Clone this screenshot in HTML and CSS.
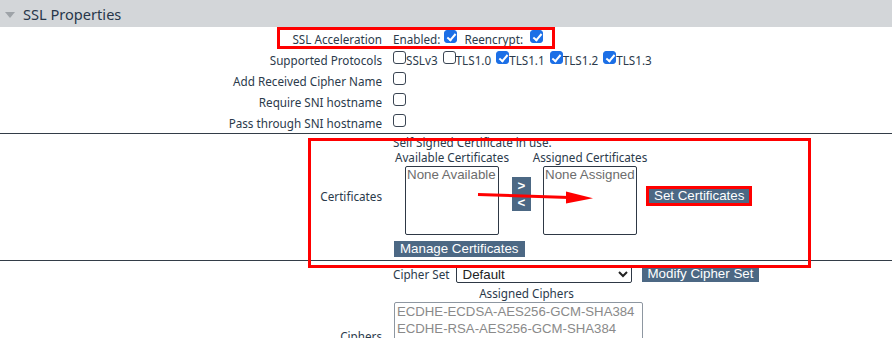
FILE: index.html
```html
<!DOCTYPE html>
<html>
<head>
<meta charset="utf-8">
<link rel="stylesheet" href="styles.css">
</head>
<body>
<div class="page">
  <div class="hdr"><span class="tri"></span><span class="title">SSL Properties</span></div>

  <div class="sec basic">
    <div class="row">
      <div class="lbl">SSL Acceleration</div>
      <div class="val">
        <span class="t">Enabled:</span><input type="checkbox" class="cb gap-l" checked>
        <span class="t gap-l2">Reencrypt:</span><input type="checkbox" class="cb gap-l3" checked>
      </div>
    </div>
    <div class="row">
      <div class="lbl">Supported Protocols</div>
      <div class="val">
        <input type="checkbox" class="cb"><span class="t item">SSLv3</span>
        <input type="checkbox" class="cb"><span class="t item">TLS1.0</span>
        <input type="checkbox" class="cb" checked><span class="t item">TLS1.1</span>
        <input type="checkbox" class="cb" checked><span class="t item">TLS1.2</span>
        <input type="checkbox" class="cb" checked><span class="t">TLS1.3</span>
      </div>
    </div>
    <div class="row">
      <div class="lbl">Add Received Cipher Name</div>
      <div class="val"><input type="checkbox" class="cb"></div>
    </div>
    <div class="row">
      <div class="lbl">Require SNI hostname</div>
      <div class="val"><input type="checkbox" class="cb"></div>
    </div>
    <div class="row">
      <div class="lbl">Pass through SNI hostname</div>
      <div class="val"><input type="checkbox" class="cb"></div>
    </div>
  </div>

  <div class="sec cert">
    <div class="lbl mid">Certificates</div>
    <div class="cert-val">
      <div class="note">Self Signed Certificate in use.</div>
      <div class="picker">
        <div class="col col1">
          <div class="cap">Available Certificates</div>
          <div class="lb">None Available</div>
        </div>
        <div class="mv">
          <button class="mvb">&gt;</button>
          <button class="mvb">&lt;</button>
        </div>
        <div class="col col2">
          <div class="cap">Assigned Certificates</div>
          <div class="lb">None Assigned</div>
        </div>
        <button class="btn set">Set Certificates</button>
      </div>
      <button class="btn manage">Manage Certificates</button>
    </div>
  </div>

  <div class="sec cipher">
    <div class="lbl mid">Ciphers</div>
    <div class="cipher-val">
      <div class="cs-row">
        <span class="t">Cipher Set</span>
        <select class="sel"><option>Default</option></select>
        <button class="btn modify">Modify Cipher Set</button>
      </div>
      <div class="cap ac">Assigned Ciphers</div>
      <div class="clb">
        <div>ECDHE-ECDSA-AES256-GCM-SHA384</div>
        <div>ECDHE-RSA-AES256-GCM-SHA384</div>
        <div>ECDHE-ECDSA-AES128-GCM-SHA256</div>
        <div>ECDHE-RSA-AES128-GCM-SHA256</div>
        <div>ECDHE-ECDSA-AES256-SHA384</div>
        <div>ECDHE-RSA-AES256-SHA384</div>
      </div>
    </div>
  </div>

  <div class="mark mark1"></div>
  <div class="mark mark2"></div>
  <svg class="arrow" width="892" height="338" viewBox="0 0 892 338">
    <line x1="478" y1="194.5" x2="569" y2="197.5" stroke="#f00" stroke-width="3"/>
    <polygon points="566,191.5 593,198.3 566,203.5" fill="#f00"/>
  </svg>
</div>
</body>
</html>
```

FILE: styles.css
```css
body {
  margin: 0;
  background: #fff;
  font-family: "Noto Sans", "Open Sans", sans-serif;
  font-size: 11.7px;
  color: #2b3a4b;
}

.page {
  position: relative;
  width: 892px;
  height: 338px;
  overflow: hidden;
}

.hdr {
  height: 27px;
  background: #d3d6d9;
  display: flex;
  align-items: center;
}

.tri {
  width: 0;
  height: 0;
  border-left: 5.5px solid transparent;
  border-right: 5.5px solid transparent;
  border-top: 6px solid #9ea3a8;
  margin-left: 5px;
  margin-top: 2px;
}

.title {
  font-size: 14.6px;
  margin-left: 8px;
  color: #27374a;
}

.sec {
  border-bottom: 1px solid #333d47;
}

.basic {
  padding-top: 1px;
}

.row {
  display: grid;
  grid-template-columns: 382px 1fr;
  column-gap: 11px;
  height: 21px;
  align-items: center;
}

.lbl {
  text-align: right;
  white-space: nowrap;
}

.val {
  display: flex;
  align-items: center;
  white-space: nowrap;
}

.t {
  white-space: nowrap;
}

.item {
  margin-right: 5px;
}

.cb {
  appearance: none;
  -webkit-appearance: none;
  width: 13px;
  height: 13px;
  margin: 0 0 4px 0;
  border: 1px solid #3a4553;
  border-radius: 3px;
  background: #fff;
  position: relative;
  flex: none;
}

.cb.gap-l { margin-left: 4px; }
.t.gap-l2 { margin-left: 7px; }
.cb.gap-l3 { margin-left: 7px; }

.cb:checked {
  background: #1c6fe6;
  border-color: #1c6fe6;
}

.cb:checked::after {
  content: "";
  position: absolute;
  left: 3.5px;
  top: 0.5px;
  width: 3px;
  height: 7px;
  border-right: 2px solid #fff;
  border-bottom: 2px solid #fff;
  transform: rotate(40deg);
}

/* Certificates */
.cert {
  display: grid;
  grid-template-columns: 382px 1fr;
  column-gap: 11px;
  padding: 1px 0 3px;
}

.mid {
  align-self: center;
}

.cert-val {
  display: flex;
  flex-direction: column;
  align-items: flex-start;
}

.note {
  line-height: 14px;
}

.picker {
  display: flex;
  align-items: flex-start;
  margin-top: 1px;
}

.col {
  display: flex;
  flex-direction: column;
  align-items: center;
}

.col1 { width: 118px; }
.col2 { width: 116px; margin-left: 1px; }

.cap {
  line-height: 14px;
  white-space: nowrap;
}

.lb {
  box-sizing: border-box;
  width: 94px;
  height: 69px;
  margin-top: 2px;
  border: 1px solid #2e3845;
  border-radius: 2px;
  font-family: "Liberation Sans", Arial, sans-serif;
  font-size: 13.33px;
  line-height: 16px;
  color: #6d6d6d;
  padding: 0 1px;
  white-space: nowrap;
  overflow: hidden;
}

.mv {
  display: flex;
  flex-direction: column;
  margin-top: 27px;
  margin-left: 1px;
}

.mvb {
  width: 19px;
  height: 17px;
  padding: 0;
  border: 0;
  background: #4c6884;
  color: #fff;
  font-family: "Liberation Sans", Arial, sans-serif;
  font-size: 13.33px;
  font-weight: bold;
  line-height: 17px;
}

.btn {
  border: 0;
  background: #4c6884;
  color: #fff;
  font-family: "Liberation Sans", Arial, sans-serif;
  font-size: 13.33px;
  height: 16px;
  line-height: 16px;
  padding: 0 6px;
  white-space: nowrap;
}

.set {
  margin-top: 39px;
  margin-left: 1px;
  height: 14px;
  line-height: 14px;
  padding: 0 5px;
  outline: 3px solid #f00;
}

.manage {
  margin-top: 6px;
  margin-left: 1px;
}

/* Ciphers */
.cipher {
  display: grid;
  grid-template-columns: 382px 1fr;
  column-gap: 11px;
  padding: 4px 0 6px;
}

.cipher-val {
  display: flex;
  flex-direction: column;
  align-items: flex-start;
}

.cs-row {
  display: flex;
  align-items: center;
  height: 18px;
}

.sel {
  margin-left: 6px;
  width: 176px;
  height: 18px;
  box-sizing: border-box;
  border: 1px solid #2e3845;
  border-radius: 2px;
  background: #fff;
  color: #222;
  font-family: "Liberation Sans", Arial, sans-serif;
  font-size: 13.33px;
  padding: 0 0 0 2px;
}

.modify {
  margin-left: 10px;
}

.ac {
  width: 267px;
  text-align: center;
  margin-top: 3px;
}

.clb {
  box-sizing: border-box;
  width: 249px;
  height: 104px;
  margin-top: 2px;
  margin-left: 1px;
  border: 1px solid #8e97a1;
  border-radius: 2px;
  padding: 1px 2px;
  font-family: "Liberation Sans", Arial, sans-serif;
  font-size: 13.2px;
  line-height: 16.5px;
  color: #8a8a8a;
  overflow: hidden;
  white-space: nowrap;
}

/* Annotations */
.mark {
  position: absolute;
  box-sizing: border-box;
  border: 3px solid #f00;
}

.mark1 {
  left: 277px;
  top: 27px;
  width: 278px;
  height: 22px;
}

.mark2 {
  left: 308px;
  top: 138px;
  width: 503px;
  height: 130px;
}

.arrow {
  position: absolute;
  left: 0;
  top: 0;
  pointer-events: none;
}
```
